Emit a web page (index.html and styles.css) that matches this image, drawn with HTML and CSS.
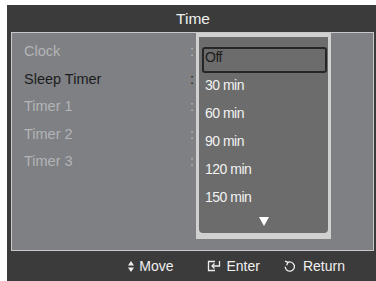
FILE: index.html
```html
<!DOCTYPE html>
<html lang="en">
<head>
  <meta charset="UTF-8">
  <title>Time</title>
  <link rel="stylesheet" href="styles.css">
</head>
<body>

  <div class="osd">
    <div class="osd-title">Time</div>

    <div class="osd-panel">
      <ul class="menu">
        <li class="menu-row is-disabled"><span>Clock</span><span>:</span></li>
        <li class="menu-row is-active"><span>Sleep Timer</span><span>:</span></li>
        <li class="menu-row is-disabled"><span>Timer 1</span><span>:</span></li>
        <li class="menu-row is-disabled"><span>Timer 2</span><span>:</span></li>
        <li class="menu-row is-disabled"><span>Timer 3</span><span>:</span></li>
      </ul>

      <!-- sleep timer dropdown -->
      <div class="dropdown">
        <ul class="dropdown-list">
          <li class="opt is-selected">Off</li>
          <li class="opt">30 min</li>
          <li class="opt">60 min</li>
          <li class="opt">90 min</li>
          <li class="opt">120 min</li>
          <li class="opt">150 min</li>
          <li class="opt-more">
            <svg width="10" height="9" viewBox="0 0 10 9"><path d="M0 0H10L5 9Z" fill="#fff"/></svg>
          </li>
        </ul>
      </div>
    </div>

    <div class="osd-footer">
      <span class="hint hint-move">
        <svg width="6" height="11" viewBox="0 0 6 11"><path d="M0 4.5L3 0L6 4.5Z M0 6.5L3 11L6 6.5Z" fill="#eee"/></svg>
        Move
      </span>
      <span class="hint hint-enter">
        <svg width="14" height="12" viewBox="0 0 14 12" fill="none" stroke="#eee" stroke-width="1.3">
          <path d="M8 1.5H1.5V10.5H8"/>
          <path d="M12.5 1V6H5"/>
          <path d="M7.5 3.5L5 6L7.5 8.5"/>
        </svg>
        Enter
      </span>
      <span class="hint hint-return">
        <svg width="11" height="12" viewBox="0 0 11 12" fill="none" stroke="#eee" stroke-width="1.3">
          <path d="M3.5 2.6A4.6 4.6 0 1 1 1.2 6.8"/>
          <path d="M1 1.2L4 2.4L2.6 5.2" />
        </svg>
        Return
      </span>
    </div>
  </div>

</body>
</html>
```

FILE: styles.css
```css
body { margin: 0; background: #fff; font-family: "Liberation Sans", Arial, sans-serif; font-size: 14px; }
ul { list-style: none; margin: 0; padding: 0; }

.osd { margin: 5px 0 0 7px; width: 369px; height: 276px; background: #3b3b3b; color: #f0f0f0; }
.osd-title { height: 27px; line-height: 27px; text-align: center; font-size: 15.5px; padding-left: 3px; }

.osd-panel { position: relative; margin: 0 2px 0 4px; height: 219px; box-sizing: border-box; border: 1px solid #c8c8ca; background: #7f8084; padding: 5px 0 0 12px; }

.menu-row { display: flex; justify-content: space-between; width: 170px; line-height: 27.5px; font-size: 14.5px; }
.menu-row.is-disabled { color: #b3b4b7; }
.menu-row.is-active { color: #1c1c1c; }

.dropdown { position: absolute; left: 184px; top: 0; width: 135px; height: 206px; box-sizing: border-box; background: #d0d0d0; padding: 4px 3px 6px 3px; }
.dropdown-list { height: 100%; box-sizing: border-box; background: #6c6c6c; border-radius: 0 0 4px 4px; padding: 10px 1px 0 3px; }

.opt { height: 26px; box-sizing: border-box; margin-bottom: 2px; border: 2px solid transparent; border-radius: 3px; line-height: 16px; padding-left: 1px; color: #f2f2f2; letter-spacing: -0.5px; }
.opt.is-selected { border-color: #262626; color: #1c1c1c; }
.opt-more { display: flex; justify-content: center; padding-top: 2px; padding-right: 2px; }

.osd-footer { display: flex; justify-content: flex-end; align-items: center; height: 30px; padding-right: 31px; }
.hint { display: flex; align-items: center; }
.hint-move svg { margin-right: 5px; }
.hint-enter { margin-left: 33px; }
.hint-enter svg { margin-right: 6px; }
.hint-return { margin-left: 24px; }
.hint-return svg { margin-right: 8px; }
```
